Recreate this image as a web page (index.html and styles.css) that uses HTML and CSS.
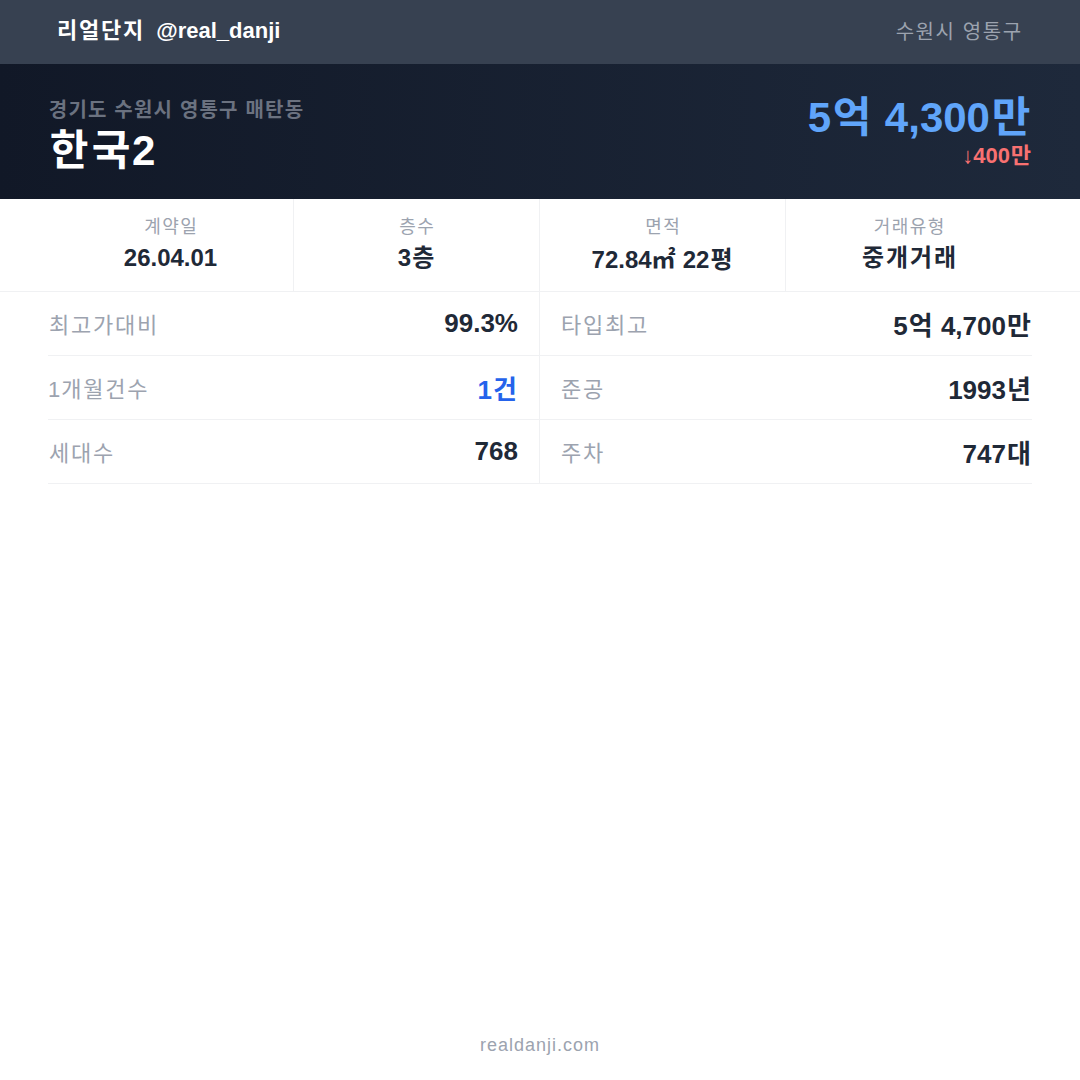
FILE: index.html
```html
<!DOCTYPE html>
<html lang="ko">
<head>
<meta charset="utf-8">
<link rel="stylesheet" href="styles.css">
</head>
<body>
<div class="page">
  <header class="topbar">
    <div class="brand"><span class="ko">리얼단지</span>&nbsp; @real_danji</div>
    <div class="region ko">수원시 영통구</div>
  </header>
  <section class="hero">
    <div class="hero-left">
      <div class="address ko">경기도 수원시 영통구 매탄동</div>
      <div class="name"><span class="ko">한국</span>2</div>
    </div>
    <div class="hero-right">
      <div class="price">5<span class="ko">억</span> 4,300<span class="ko">만</span></div>
      <div class="delta"><span class="arrow">↓</span>400<span class="ko">만</span></div>
    </div>
  </section>
  <section class="stats">
    <div class="stat"><div class="stat-label ko">계약일</div><div class="stat-value">26.04.01</div></div>
    <div class="stat"><div class="stat-label ko">층수</div><div class="stat-value">3<span class="ko">층</span></div></div>
    <div class="stat"><div class="stat-label ko">면적</div><div class="stat-value">72.84<span class="unit">㎡</span> 22<span class="ko">평</span></div></div>
    <div class="stat"><div class="stat-label ko">거래유형</div><div class="stat-value ko">중개거래</div></div>
  </section>
  <section class="details">
    <div class="cell left"><span class="d-label ko">최고가대비</span><span class="d-value">99.3%</span></div>
    <div class="cell right"><span class="d-label ko">타입최고</span><span class="d-value">5<span class="ko">억</span> 4,700<span class="ko">만</span></span></div>
    <div class="cell left"><span class="d-label">1<span class="ko">개월건수</span></span><span class="d-value blue">1<span class="ko">건</span></span></div>
    <div class="cell right"><span class="d-label ko">준공</span><span class="d-value">1993<span class="ko">년</span></span></div>
    <div class="cell left"><span class="d-label ko">세대수</span><span class="d-value">768</span></div>
    <div class="cell right"><span class="d-label ko">주차</span><span class="d-value">747<span class="ko">대</span></span></div>
  </section>
  <div class="spacer"></div>
  <footer class="footer">realdanji.com</footer>
</div>
</body>
</html>
```

FILE: styles.css
```css
* { box-sizing: border-box; margin: 0; padding: 0; }
html, body { width: 1080px; height: 1080px; background: #ffffff; }
body {
  font-family: "Liberation Sans", "Noto Sans CJK KR", sans-serif;
  white-space: nowrap;
  overflow: hidden;
}
.ko {
  letter-spacing: 0.08em;
  margin-left: 0.04em;
  margin-right: -0.04em;
}
.unit {
  font-family: "Noto Sans CJK KR", sans-serif;
  letter-spacing: 0.02em;
}
.arrow { font-weight: 400; }
.page {
  width: 1080px;
  height: 1080px;
  display: flex;
  flex-direction: column;
}
.topbar {
  height: 64px;
  background: #374151;
  display: flex;
  align-items: center;
  justify-content: space-between;
  padding: 0 58px 0 56px;
}
.brand {
  color: #ffffff;
  font-weight: 700;
  font-size: 22px;
  line-height: 28px;
  margin-top: -2px;
}
.region {
  color: #9ca3af;
  font-size: 20px;
  line-height: 28px;
  margin-top: -1px;
}
.hero {
  height: 135px;
  background: linear-gradient(90deg, #111827 0%, #1e293b 100%);
  display: flex;
  align-items: center;
  justify-content: space-between;
  padding: 0 48px;
}
.hero-left { display: flex; flex-direction: column; margin-top: 8px; }
.address {
  color: #6b7280;
  font-weight: 700;
  font-size: 20px;
  line-height: 28px;
  letter-spacing: 0.06em;
}
.name {
  color: #ffffff;
  font-weight: 700;
  font-size: 42px;
  line-height: 50px;
  margin-top: 2px;
}
.hero-right { display: flex; flex-direction: column; align-items: flex-end; }
.price {
  color: #60a5fa;
  font-weight: 700;
  font-size: 42px;
  line-height: 50px;
}
.delta {
  color: #f87171;
  font-weight: 700;
  font-size: 22px;
  line-height: 28px;
  margin-top: -1px;
}
.stats {
  display: grid;
  grid-template-columns: repeat(4, 1fr);
  padding: 0 48px;
  border-bottom: 1px solid #f0f1f3;
  height: 93px;
}
.stat {
  display: flex;
  flex-direction: column;
  align-items: center;
  padding-top: 16px;
  border-right: 1px solid #f0f1f3;
}
.stat:last-child { border-right: none; }
.stat-label {
  color: #9ca3af;
  font-size: 18px;
  line-height: 24px;
}
.stat-value {
  color: #1f2937;
  font-weight: 700;
  font-size: 24px;
  line-height: 34px;
  margin-top: 2px;
}
.details {
  display: grid;
  grid-template-columns: 1fr 1fr;
  padding: 0 48px;
}
.cell {
  height: 64px;
  display: flex;
  align-items: center;
  justify-content: space-between;
  border-bottom: 1px solid #f0f1f3;
}
.cell.left { padding-right: 21px; border-right: 1px solid #f0f1f3; }
.cell.right { padding-left: 20px; }
.d-label {
  color: #9ca3af;
  font-size: 22px;
  margin-top: -2px;
}
.d-value {
  color: #1f2937;
  font-weight: 700;
  font-size: 26px;
}
.d-value.blue { color: #2563eb; }
.spacer { flex: 1; }
.footer {
  text-align: center;
  color: #9ca3af;
  font-size: 18px;
  letter-spacing: 1px;
  padding-bottom: 24px;
}
```
